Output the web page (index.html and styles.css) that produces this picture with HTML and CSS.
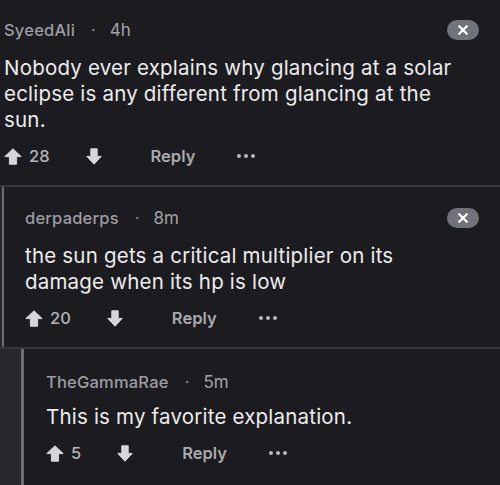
FILE: index.html
```html
<!DOCTYPE html>
<html>
<head>
<meta charset="utf-8">
<link rel="stylesheet" href="styles.css">
</head>
<body>
<div class="thread">
  <div class="row depth0">
    <div class="comment">
      <div class="meta">
        <span class="user">SyeedAli</span><span class="dot">·</span><span class="time">4h</span>
        <span class="close"><svg viewBox="0 0 10 10" width="10" height="10"><path d="M1.2 1.2 L8.8 8.8 M8.8 1.2 L1.2 8.8" /></svg></span>
      </div>
      <div class="body">Nobody ever explains why glancing at a solar eclipse is any different from glancing at the sun.</div>
      <div class="actions">
        <svg class="up" viewBox="0 0 18 17" width="18" height="17"><path d="M9 0.8 L17.2 8.6 H12.6 V16.2 H5.4 V8.6 H0.8 Z"/></svg>
        <span class="count">28</span>
        <svg class="down" viewBox="0 0 16 17" width="16" height="17"><path d="M4.8 0.8 H11.2 V8.4 H15.2 L8 16.2 L0.8 8.4 H4.8 Z"/></svg>
        <span class="reply">Reply</span>
        <span class="more"><i></i><i></i><i></i></span>
      </div>
    </div>
  </div>
  <div class="row depth1">
    <div class="gutter g1"><span class="line"></span></div>
    <div class="comment">
      <div class="meta">
        <span class="user">derpaderps</span><span class="dot">·</span><span class="time">8m</span>
        <span class="close"><svg viewBox="0 0 10 10" width="10" height="10"><path d="M1.2 1.2 L8.8 8.8 M8.8 1.2 L1.2 8.8" /></svg></span>
      </div>
      <div class="body">the sun gets a critical multiplier on its damage when its hp is low</div>
      <div class="actions">
        <svg class="up" viewBox="0 0 18 17" width="18" height="17"><path d="M9 0.8 L17.2 8.6 H12.6 V16.2 H5.4 V8.6 H0.8 Z"/></svg>
        <span class="count">20</span>
        <svg class="down" viewBox="0 0 16 17" width="16" height="17"><path d="M4.8 0.8 H11.2 V8.4 H15.2 L8 16.2 L0.8 8.4 H4.8 Z"/></svg>
        <span class="reply">Reply</span>
        <span class="more"><i></i><i></i><i></i></span>
      </div>
    </div>
  </div>
  <div class="row depth2">
    <div class="gutter g2"><span class="line"></span></div>
    <div class="comment">
      <div class="meta">
        <span class="user">TheGammaRae</span><span class="dot">·</span><span class="time">5m</span>
      </div>
      <div class="body">This is my favorite explanation.</div>
      <div class="actions">
        <svg class="up" viewBox="0 0 18 17" width="18" height="17"><path d="M9 0.8 L17.2 8.6 H12.6 V16.2 H5.4 V8.6 H0.8 Z"/></svg>
        <span class="count">5</span>
        <svg class="down" viewBox="0 0 16 17" width="16" height="17"><path d="M4.8 0.8 H11.2 V8.4 H15.2 L8 16.2 L0.8 8.4 H4.8 Z"/></svg>
        <span class="reply">Reply</span>
        <span class="more"><i></i><i></i><i></i></span>
      </div>
    </div>
  </div>
</div>
</body>
</html>
```
FILE: styles.css
```css
html, body {
  margin: 0;
  padding: 0;
  background: #1c1b20;
  height: 100%;
}
body {
  font-family: Inter, "Noto Sans", sans-serif;
  color: #ebebed;
  overflow: hidden;
}
.thread {
  display: flex;
  flex-direction: column;
  height: 100%;
}
.row {
  display: flex;
}
.row.depth1, .row.depth2 {
  border-top: 2px solid #35353b;
}
.row.depth2 {
  flex: 1;
}
.row.depth0 .comment {
  padding-left: 4px;
  padding-top: 20px;
}
.gutter {
  display: flex;
  flex-shrink: 0;
}
.g1 {
  width: 4px;
  background: #26262b;
}
.g1 .line {
  width: 2px;
  margin-left: 2px;
  background: #6e6e75;
}
.g2 {
  width: 24px;
  background: #28282d;
}
.g2 .line {
  width: 3px;
  margin-left: 21px;
  background: #6e6e75;
}
.depth1 .comment {
  padding-left: 21px;
}
.depth2 .comment {
  padding-left: 22px;
  padding-top: 23px;
}
.depth2 .meta {
  margin-bottom: 12px;
}
.comment {
  flex: 1;
  padding: 21px 24px 19px 0;
  min-width: 0;
}
.meta {
  display: flex;
  align-items: center;
  height: 20px;
  line-height: 20px;
  font-size: 16.5px;
  margin-bottom: 15px;
}
.user {
  font-weight: 500;
  color: #9d9da3;
  letter-spacing: 0.2px;
}
.dot {
  margin: 0 14px 0 16px;
  color: #8c8c92;
}
.time {
  color: #a2a2a8;
  font-size: 17px;
}
.close {
  margin-left: auto;
  margin-right: -3px;
  width: 32px;
  height: 20px;
  border-radius: 10px;
  background: #707379;
  display: flex;
  align-items: center;
  justify-content: center;
}
.close svg path {
  stroke: #ffffff;
  stroke-width: 2.2;
  stroke-linecap: round;
  fill: none;
}
.body {
  font-size: 20.5px;
  line-height: 26px;
  letter-spacing: 0.2px;
  color: #ececee;
  padding-right: 18px;
}
.actions {
  display: flex;
  align-items: center;
  height: 20px;
  margin-top: 13px;
  font-size: 16px;
}
.actions svg path {
  fill: #d6d6da;
  stroke: #d6d6da;
  stroke-width: 1;
  stroke-linejoin: round;
}
.count {
  margin-left: 7px;
  color: #b4b4b9;
  font-weight: 500;
  font-size: 16.5px;
}
.down {
  margin-left: 36px;
}
.reply {
  margin-left: 49px;
  color: #a9a9ae;
  font-weight: 600;
  font-size: 16.5px;
}
.more {
  margin-left: 42px;
  display: flex;
  gap: 3px;
}
.more i {
  width: 4px;
  height: 4px;
  border-radius: 50%;
  background: #b9b9be;
}
```
